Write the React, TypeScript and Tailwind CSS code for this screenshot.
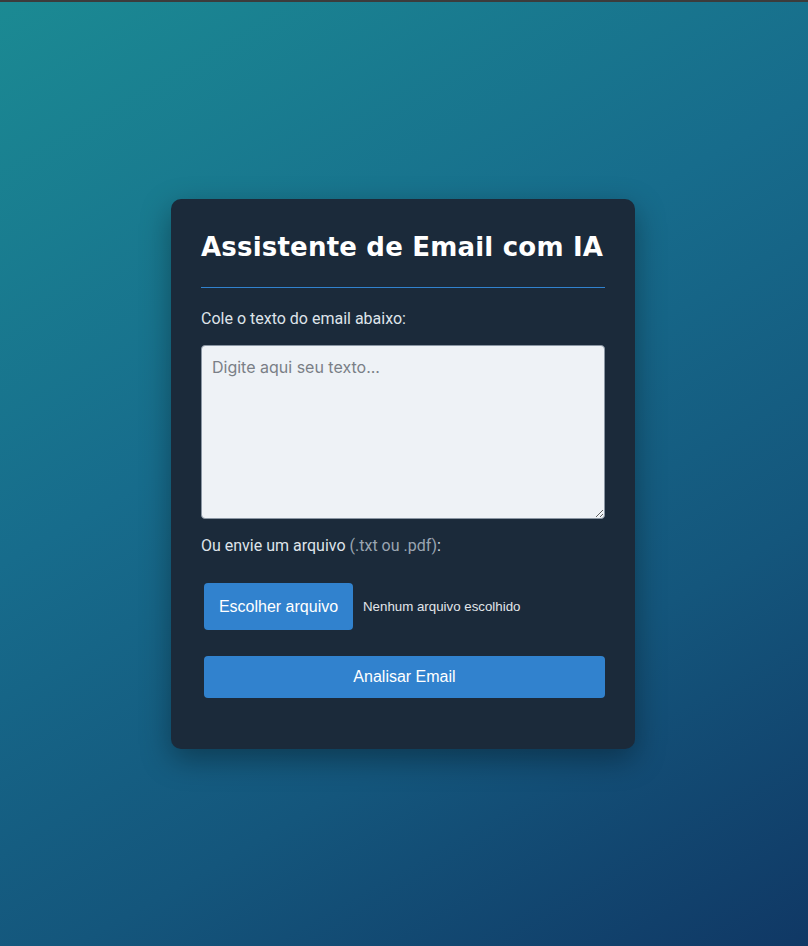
import React from "react";

export default function App() {
  return (
    <div className="min-h-[946px] w-full flex flex-col bg-[linear-gradient(150deg,#1b8a93_0%,#176c8c_40%,#14567c_70%,#103865_100%)]">
      <div className="h-[2px] w-full bg-[#3c3c3c]" />
      <div className="flex-1 flex items-center justify-center">
        <div className="mr-[2px] w-[464px] h-[550px] rounded-[10px] bg-[#1b2a3a] px-[30px] pt-[30px] shadow-[0_10px_30px_rgba(0,0,0,0.35)] flex flex-col">
          <h1 className="whitespace-nowrap font-['DejaVu_Sans',sans-serif] text-white font-bold text-[26px] leading-[36px] tracking-[0.2px] pb-[22px] border-b border-[#3182ce]">
            Assistente de Email com IA
          </h1>
          <label className="mt-[21px] font-['Roboto',sans-serif] text-[16px] leading-[20px] text-[#dfe4ea]">
            Cole o texto do email abaixo:
          </label>
          <textarea
            placeholder="Digite aqui seu texto..."
            className="mt-[16px] h-[174px] w-full rounded-[4px] border border-[#8a96a3] bg-[#eef2f6] p-[10px] font-['Inter',sans-serif] text-[16px] leading-[22px] text-[#333] placeholder:text-[#7a7f86] outline-none"
          />
          <label className="mt-[17px] font-['Roboto',sans-serif] text-[16px] leading-[20px] text-[#dfe4ea]">
            Ou envie um arquivo <span className="text-[#9aa5b1]">(.txt ou .pdf)</span>:
          </label>
          <div className="mt-[27px] ml-[3px] flex items-center font-['Liberation_Sans',Arial,sans-serif]">
            <div className="h-[47px] w-[149px] rounded-[4px] bg-[#3182ce] flex items-center justify-center text-white text-[16px]">
              Escolher arquivo
            </div>
            <span className="ml-[10px] text-[13.3px] text-[#e2e6ea]">
              Nenhum arquivo escolhido
            </span>
          </div>
          <button className="mt-[26px] ml-[3px] h-[42px] w-[401px] rounded-[4px] bg-[#3182ce] font-['Liberation_Sans',Arial,sans-serif] text-white text-[16px]">
            Analisar Email
          </button>
        </div>
      </div>
    </div>
  );
}
